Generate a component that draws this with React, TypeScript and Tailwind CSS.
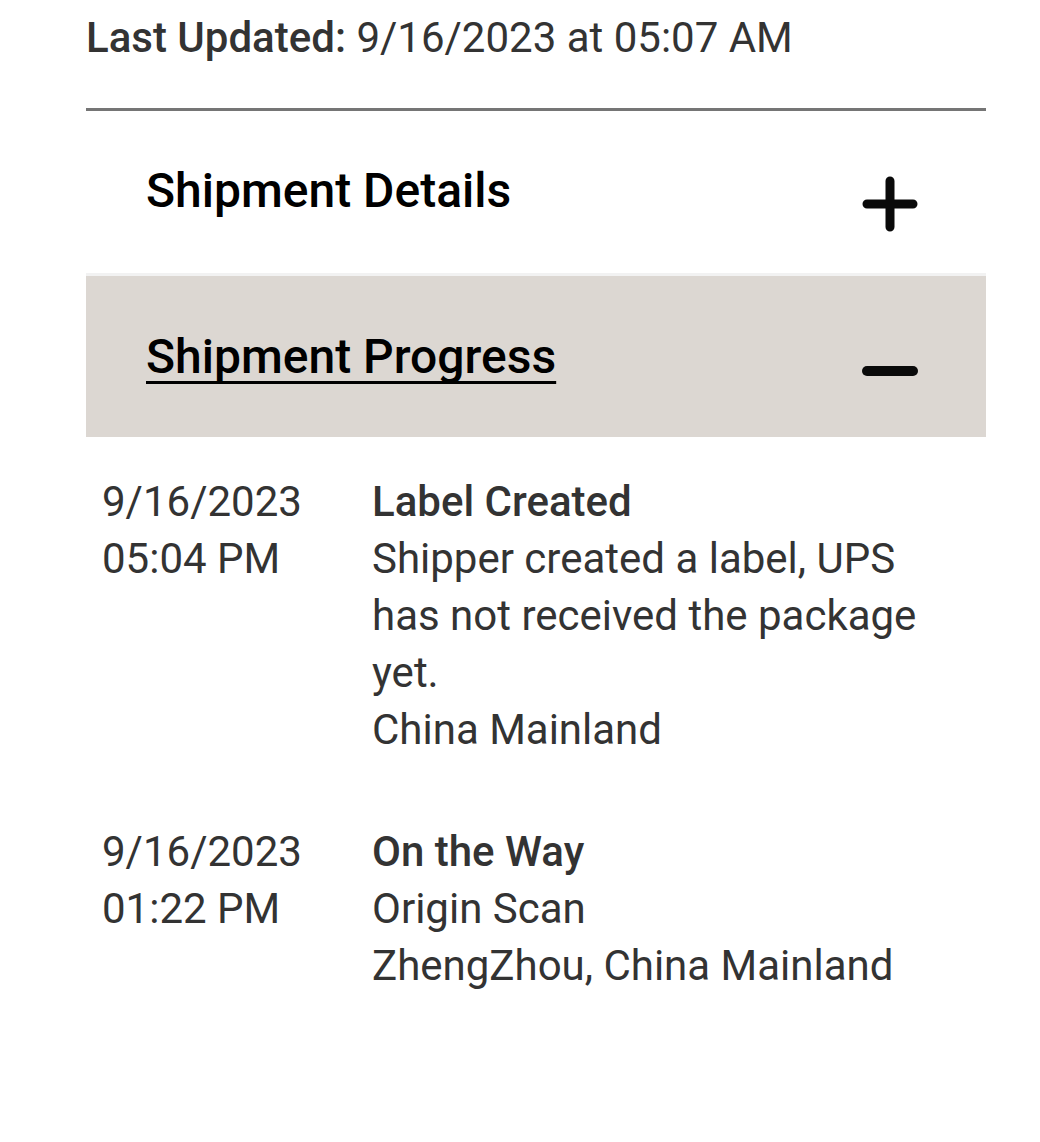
import React from 'react';

const events = [
  {
    date: '9/16/2023',
    time: '05:04 PM',
    status: 'Label Created',
    lines: ['Shipper created a label, UPS has not received the package yet.', 'China Mainland'],
  },
  {
    date: '9/16/2023',
    time: '01:22 PM',
    status: 'On the Way',
    lines: ['Origin Scan', 'ZhengZhou, China Mainland'],
  },
];

function PlusIcon() {
  return (
    <svg width="56" height="56" viewBox="0 0 56 56" className="mt-[65px] shrink-0">
      <path d="M5 28h46M28 5v46" stroke="#0a0a0a" strokeWidth="9" strokeLinecap="round" />
    </svg>
  );
}

function MinusIcon() {
  return (
    <svg width="56" height="12" viewBox="0 0 56 12" className="mt-[28px] shrink-0">
      <path d="M5 6h46" stroke="#0a0a0a" strokeWidth="10" strokeLinecap="round" />
    </svg>
  );
}

export default function App() {
  return (
    <div className="min-h-screen bg-white font-['Roboto',sans-serif] text-[#333333]">
      <div className="ml-[86px] w-[900px]">
        {/* last updated */}
        <p className="pt-[9px] text-[42px] leading-[57px]">
          <span className="font-medium">Last Updated:</span> 9/16/2023 at 05:07 AM
        </p>

        <div className="mt-[42px] border-t-[3px] border-[#757575]">
          <button className="flex h-[162px] w-full items-start justify-between pl-[60px] pr-[68px] text-left">
            <span className="mt-[51px] text-[48px] font-medium leading-[57px] text-black">Shipment Details</span>
            <PlusIcon />
          </button>
          <div className="h-[3px] bg-[#f2f2f2]" />
          <button className="flex h-[161px] w-full items-center justify-between bg-[#dcd7d2] pl-[60px] pr-[68px] text-left">
            <span className="text-[48px] font-medium leading-[57px] text-black underline decoration-[3px] underline-offset-[8px] [text-decoration-skip-ink:none]">
              Shipment Progress
            </span>
            <MinusIcon />
          </button>
        </div>

        {/* timeline */}
        <div className="flex flex-col gap-[65px] pt-[36px] pl-4 text-[42px] leading-[57px]">
          {events.map((ev, i) => (
            <div key={i} className="grid grid-cols-[270px_568px]">
              <div>
                <div>{ev.date}</div>
                <div>{ev.time}</div>
              </div>
              <div>
                <div className="font-medium">{ev.status}</div>
                {ev.lines.map((l, j) => (
                  <div key={j}>{l}</div>
                ))}
              </div>
            </div>
          ))}
        </div>
      </div>
    </div>
  );
}
